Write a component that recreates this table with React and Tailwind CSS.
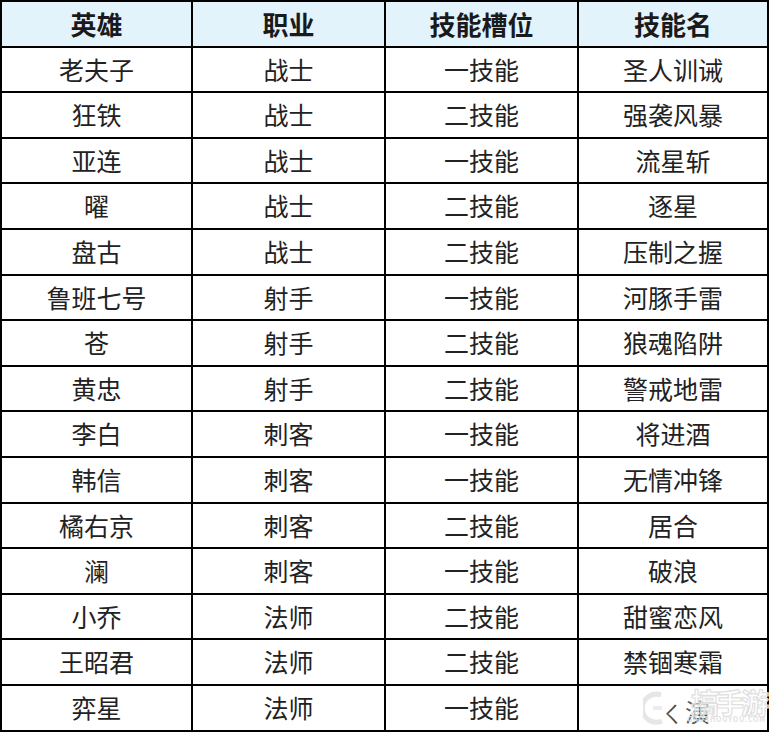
import React from 'react';

const rows = [
  ['老夫子', '战士', '一技能', '圣人训诫'],
  ['狂铁', '战士', '二技能', '强袭风暴'],
  ['亚连', '战士', '一技能', '流星斩'],
  ['曜', '战士', '二技能', '逐星'],
  ['盘古', '战士', '二技能', '压制之握'],
  ['鲁班七号', '射手', '一技能', '河豚手雷'],
  ['苍', '射手', '二技能', '狼魂陷阱'],
  ['黄忠', '射手', '二技能', '警戒地雷'],
  ['李白', '刺客', '一技能', '将进酒'],
  ['韩信', '刺客', '一技能', '无情冲锋'],
  ['橘右京', '刺客', '二技能', '居合'],
  ['澜', '刺客', '一技能', '破浪'],
  ['小乔', '法师', '二技能', '甜蜜恋风'],
  ['王昭君', '法师', '二技能', '禁锢寒霜'],
  ['弈星', '法师', '一技能', null],
];

const headers = ['英雄', '职业', '技能槽位', '技能名'];

const font = { fontFamily: '"Noto Sans CJK SC", "Noto Sans", sans-serif' };

// the last skill name is mostly covered by the site watermark
const WatermarkCell = () => (
  <div className="relative w-full h-full flex items-center pl-[64px]">
    <svg width="22" height="36" viewBox="0 0 22 36" className="shrink-0">
      <path d="M18 5 A14 14 0 1 0 19 31" fill="none" stroke="#e6e6e6" strokeWidth="5" />
      <path d="M10 18 L19 18" stroke="#ececec" strokeWidth="4" />
    </svg>
    <div className="flex items-center gap-[2px] ml-[-4px] mt-[8px] text-[25px] leading-none text-[#222]">
      <span className="text-[22px] opacity-80">ㄑ</span>
      <span className="opacity-75">演</span>
    </div>
    <div className="absolute right-[1px] top-0 flex flex-col items-end pointer-events-none">
      <span
        className="text-[28px] font-bold leading-[32px] tracking-[-3px] text-white/50"
        style={{ WebkitTextStroke: '1.2px #e0e0e0' }}
      >
        搞手游
      </span>
      <span className="text-[7px] font-bold leading-none text-[#e2e2e2] tracking-[0.8px] mt-[-2px]">
        GAOSHOUYOU.COM
      </span>
    </div>
  </div>
);

const App = () => {
  return (
    <div className="w-[770px] h-[732px] bg-white" style={font}>
      <div className="w-[769px] border-l-2 border-t-2 border-black">
        <div className="grid grid-cols-[191px_193px_193px_190px]">
          {headers.map((h) => (
            <div
              key={h}
              className="h-[45.6px] flex items-center justify-center bg-[#e2f3fc] border-r-2 border-b-2 border-black text-[26px] font-bold text-[#1a1a1a]"
            >
              {h}
            </div>
          ))}
          {rows.map((row, ri) =>
            row.map((cell, ci) => (
              <div
                key={ri + '-' + ci}
                className="h-[45.6px] flex items-center justify-center border-r-2 border-b-2 border-black text-[25px] text-[#222]"
              >
                {cell === null ? <WatermarkCell /> : cell}
              </div>
            ))
          )}
        </div>
      </div>
    </div>
  );
};

export default App;
